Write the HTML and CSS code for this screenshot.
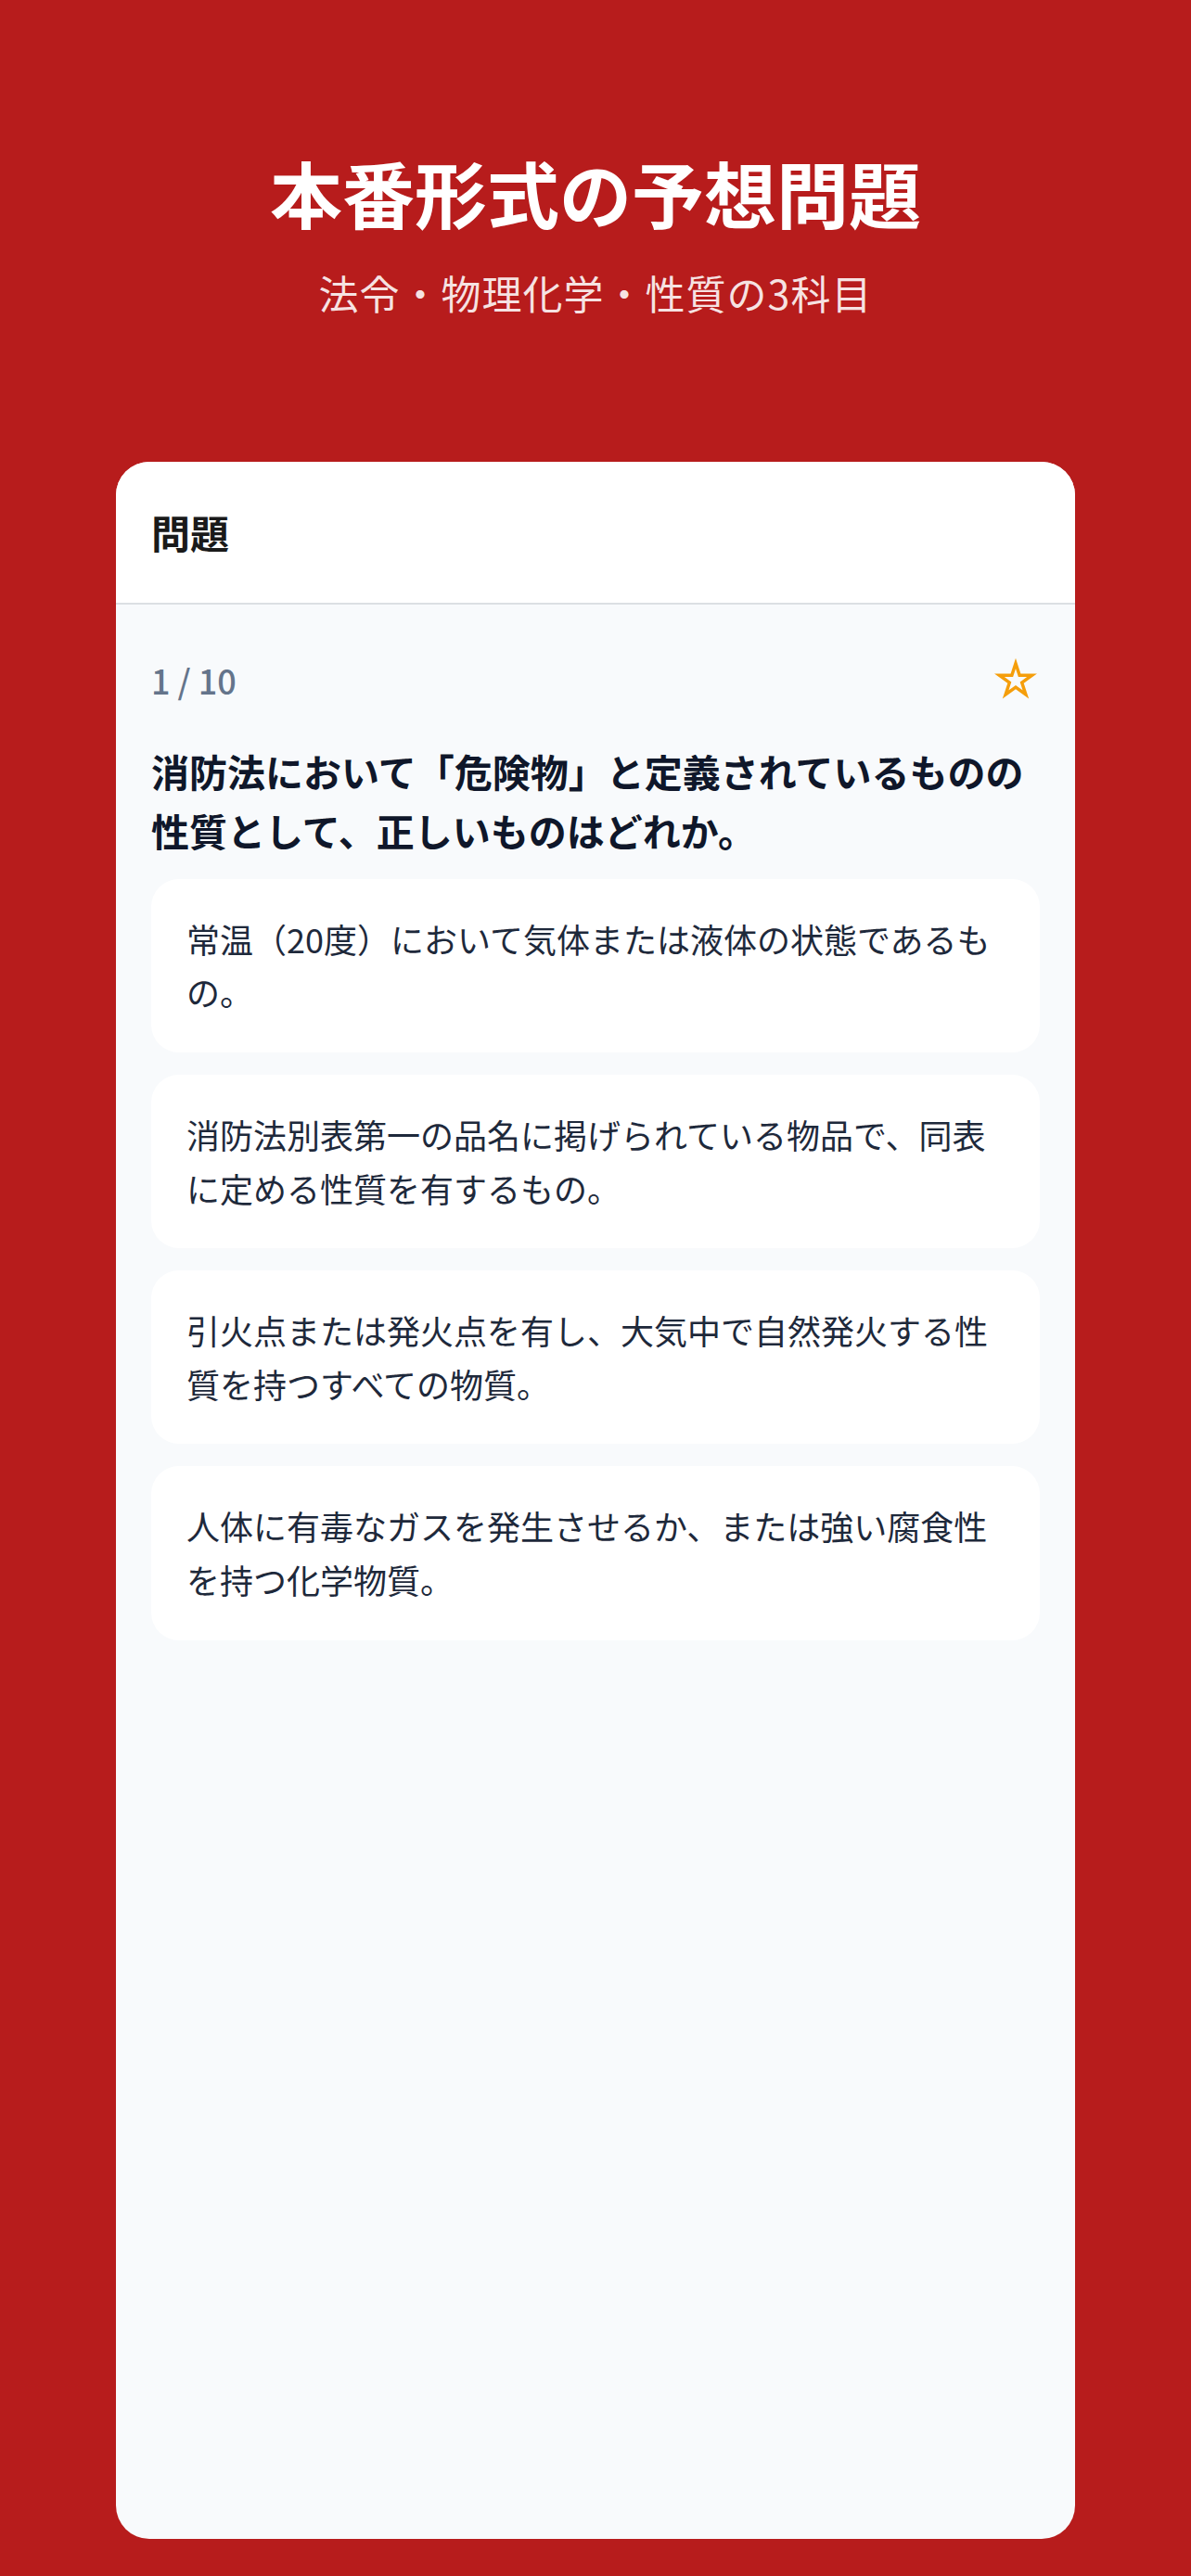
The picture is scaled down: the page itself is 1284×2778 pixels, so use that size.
FILE: index.html
```html
<!DOCTYPE html>
<html lang="ja">

<head>
    <meta charset="UTF-8">
    <meta name="viewport" content="width=device-width, initial-scale=1.0">
    <title>本番形式の予想問題</title>
    <link rel="stylesheet" href="styles.css">
</head>

<body>
    <div class="page">
        <header class="hero">
            <h1 class="hero-title">本番形式の予想問題</h1>
            <p class="hero-sub">法令・物理化学・性質の3科目</p>
        </header>

        <main class="quiz-card">
            <div class="quiz-header">問題</div>

            <div class="quiz-body">
                <div class="quiz-meta">
                    <span class="quiz-count">1 / 10</span>
                    <!-- bookmark star -->
                    <svg class="star" width="52" height="52" viewBox="0 0 52 52">
                        <polygon points="26,8.5 30.16,21.28 43.59,21.28 32.72,29.18 36.87,41.97 26,34.07 15.13,41.97 19.28,29.18 8.41,21.28 21.84,21.28"
                            fill="none" stroke="#f59e0b" stroke-width="3.5" stroke-linejoin="miter" />
                    </svg>
                </div>

                <p class="question">消防法において「危険物」と定義されているものの性質として、正しいものはどれか。</p>

                <div class="choices">
                    <div class="choice">常温（20度）において気体または液体の状態であるもの。</div>
                    <div class="choice">消防法別表第一の品名に掲げられている物品で、同表に定める性質を有するもの。</div>
                    <div class="choice">引火点または発火点を有し、大気中で自然発火する性質を持つすべての物質。</div>
                    <div class="choice">人体に有毒なガスを発生させるか、または強い腐食性を持つ化学物質。</div>
                </div>
            </div>
        </main>
    </div>
</body>

</html>
```

FILE: styles.css
```css
*,
*::before,
*::after {
    box-sizing: border-box;
    margin: 0;
    padding: 0;
}

body {
    background-color: #b71c1c;
    font-family: "Noto Sans CJK JP", "Noto Sans", sans-serif;
}

.page {
    min-height: 2778px;
    display: flex;
    flex-direction: column;
}

.hero {
    padding-top: 157px;
    text-align: center;
    color: #ffffff;
}

.hero-title {
    font-size: 78px;
    font-weight: 700;
    line-height: 1.3;
}

.hero-sub {
    margin-top: 25px;
    font-size: 43px;
    letter-spacing: 1px;
    line-height: 1.5;
    color: rgba(255, 255, 255, 0.88);
}

.quiz-card {
    flex: 1;
    width: 1034px;
    margin: 150px auto 40px;
    display: flex;
    flex-direction: column;
    background-color: #f8fafc;
    border-radius: 36px;
    overflow: hidden;
}

.quiz-header {
    background-color: #ffffff;
    padding: 46px 38px;
    font-size: 42px;
    font-weight: 700;
    line-height: 60px;
    color: #1a1a1a;
    border-bottom: 2px solid #dcdfe3;
}

.quiz-body {
    flex: 1;
    padding: 55px 38px 40px;
}

.quiz-meta {
    display: flex;
    justify-content: space-between;
    align-items: center;
}

.quiz-count {
    font-size: 36px;
    font-weight: 500;
    color: #64748b;
}

.question {
    margin-top: 40px;
    font-size: 41px;
    font-weight: 700;
    line-height: 64px;
    color: #0f172a;
}

.choices {
    margin-top: 21px;
    display: flex;
    flex-direction: column;
    gap: 24px;
}

.choice {
    background-color: #ffffff;
    border-radius: 30px;
    padding: 36px 38px;
    font-size: 36px;
    line-height: 1.6;
    color: #1e293b;
}
```
